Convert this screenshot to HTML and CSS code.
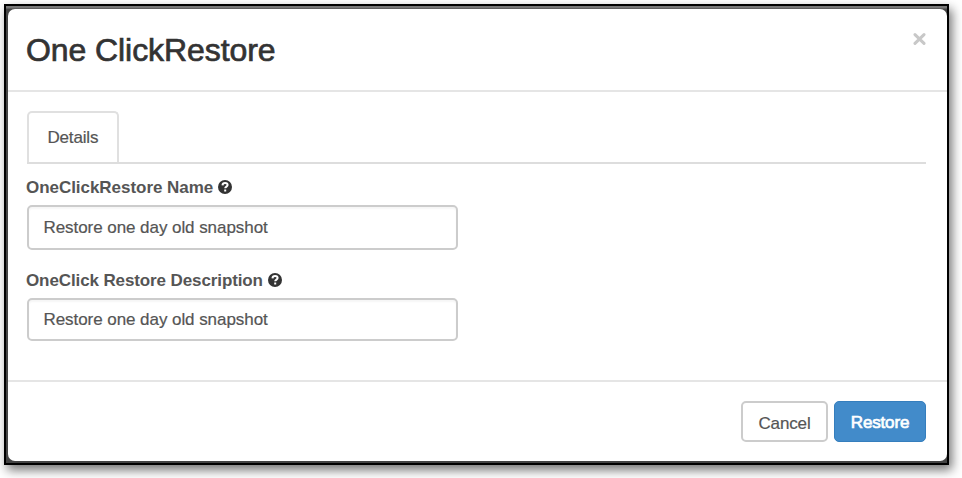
FILE: index.html
```html
<!DOCTYPE html>
<html lang="en">
<head>
<meta charset="utf-8">
<title>One ClickRestore</title>
<link rel="stylesheet" href="styles.css">
</head>
<body>
<div class="frame">
  <div class="dialog">
    <header class="header">
      <h3 class="title">One ClickRestore</h3>
      <button class="close" aria-label="Close"><svg viewBox="0 0 13 12"><path d="M2 1.6 11 10.4M11 1.6 2 10.4"/></svg></button>
    </header>
    <main class="body">
      <nav class="tabs"><span class="tab">Details</span></nav>
      <label class="label label-name"><span class="label-text">OneClickRestore Name</span>
        <svg class="help" viewBox="0 0 14 14"><circle cx="7" cy="7" r="7"/><path d="M4.5 5.4C4.6 3.7 5.6 3.1 7.1 3.1 8.7 3.1 9.6 4 9.6 5.1 9.6 6.6 7.2 6.6 7.2 8.3M7.2 9.5V11.4"/></svg>
      </label>
      <div class="field field-name">Restore one day old snapshot</div>
      <label class="label label-desc"><span class="label-text">OneClick Restore Description</span>
        <svg class="help" viewBox="0 0 14 14"><circle cx="7" cy="7" r="7"/><path d="M4.5 5.4C4.6 3.7 5.6 3.1 7.1 3.1 8.7 3.1 9.6 4 9.6 5.1 9.6 6.6 7.2 6.6 7.2 8.3M7.2 9.5V11.4"/></svg>
      </label>
      <div class="field field-desc">Restore one day old snapshot</div>
    </main>
    <footer class="footer">
      <button class="btn cancel">Cancel</button>
      <button class="btn restore">Restore</button>
    </footer>
  </div>
</div>
</body>
</html>
```
FILE: styles.css
```css
* { box-sizing: border-box; }
body {
  margin: 0;
  padding: 4px;
  height: 478px;
  overflow: hidden;
  background: #fff;
  font-family: "Liberation Sans", Arial, sans-serif;
  color: #555;
}
.frame {
  width: 945px;
  height: 461px;
  padding: 3px 0 2px 2px;
  border: 2px solid #000;
  background: linear-gradient(#777 0, #777 2px, #444 3px, #444 100%);
  box-shadow: 3px 5px 10px rgba(0, 0, 0, .55);
}
.dialog {
  display: flex;
  flex-direction: column;
  height: 452px;
  border-radius: 7px;
  background: #fff;
}
.header {
  display: flex;
  justify-content: space-between;
  align-items: flex-start;
  height: 83px;
  padding: 0 21px 0 18px;
  border-bottom: 2px solid #e5e5e5;
}
.title {
  margin: 21px 0 0;
  font-size: 32px;
  font-weight: 400;
  line-height: 40px;
  letter-spacing: -.08px;
  color: #333;
  -webkit-text-stroke: .7px #333;
}
.close {
  width: 13px;
  height: 12px;
  margin-top: 24px;
  padding: 0;
  border: 0;
  background: none;
}
.close svg { display: block; width: 13px; height: 12px; }
.close path { stroke: #c8c8c8; stroke-width: 3; stroke-linecap: round; fill: none; }
.body {
  height: 288px;
  padding: 19px 21px 0 19px;
}
.tabs {
  display: flex;
  height: 53px;
  border-bottom: 2px solid #ddd;
}
.tab {
  width: 92px;
  height: 51px;
  padding-left: 18.5px;
  border: 2px solid #e0e0e0;
  border-bottom: 0;
  border-radius: 5px 5px 0 0;
  font-size: 17px;
  line-height: 50px;
  letter-spacing: -.18px;
  -webkit-text-stroke: .2px #555;
}
.label {
  display: flex;
  align-items: center;
  gap: 5px;
  height: 20px;
  margin-left: -1px;
  font-size: 17px;
  font-weight: 700;
  white-space: nowrap;
}
.label-name { margin-top: 14px; letter-spacing: -.04px; }
.label-desc { margin-top: 21px; letter-spacing: -.11px; }
.help { width: 14px; height: 14px; margin-bottom: 2px; }
.help circle { fill: #333; }
.help path { fill: none; stroke: #fff; stroke-width: 2; }
.field {
  width: 431px;
  padding-left: 14.5px;
  border: 2px solid #ccc;
  border-radius: 5px;
  box-shadow: inset 0 2px 2px rgba(0, 0, 0, .04);
  font-size: 17px;
  letter-spacing: -.06px;
  -webkit-text-stroke: .2px #555;
}
.field-name { height: 45px; margin-top: 7px; line-height: 41px; }
.field-desc { height: 43px; margin-top: 7px; line-height: 40px; }
.footer {
  display: flex;
  justify-content: flex-end;
  gap: 6px;
  height: 81px;
  padding: 19px 21px 0;
  border-top: 2px solid #e5e5e5;
}
.btn {
  height: 41px;
  padding: 2px 0 0;
  border-radius: 5px;
  font: 17px/37px "Liberation Sans", Arial, sans-serif;
  letter-spacing: -.15px;
}
.cancel {
  width: 87px;
  border: 2px solid #ccc;
  background: #fff;
  color: #555;
  -webkit-text-stroke: .2px #555;
}
.restore {
  width: 92px;
  border: 1px solid #357ebd;
  background: #428bca;
  color: #fff;
  -webkit-text-stroke: .7px #fff;
}
```
